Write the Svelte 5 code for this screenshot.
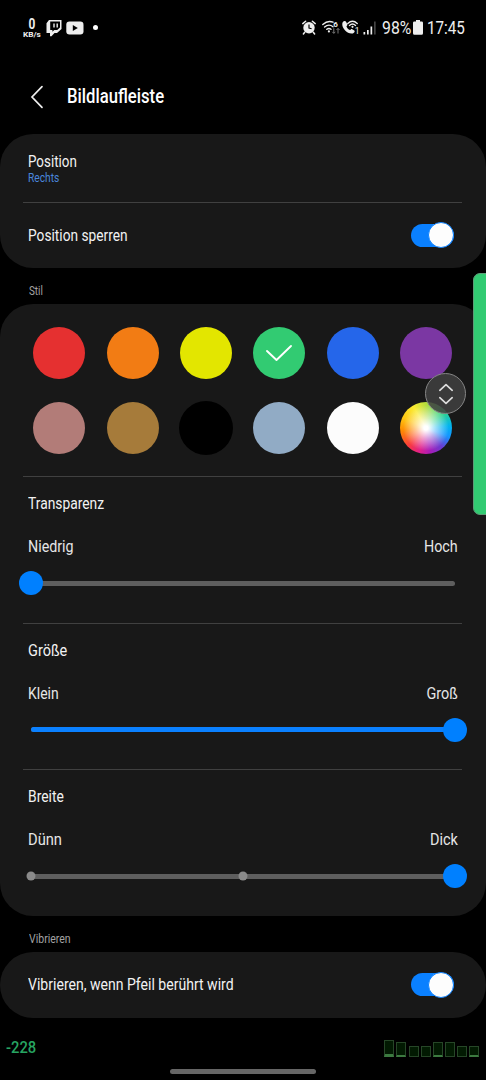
<script>
	let locked = true;
	let vibrate = true;
	let selected = 3;

	const colors = [
		"#e53030",
		"#f27c14",
		"#e3e600",
		"#32cb72",
		"#2566ea",
		"#7b37a3",
		"#b27c78",
		"#a67b3a",
		"#000000",
		"#91abc5",
		"#fcfcfc",
		"wheel"
	];

	const sliders = [
		{ title: "Transparenz", width: 76, min: "Niedrig", minWidth: 45.5, max: "Hoch", maxWidth: 34, value: 0, filled: true, ticks: [] },
		{ title: "Größe", width: 39, min: "Klein", minWidth: 30.5, max: "Groß", maxWidth: 31.5, value: 100, filled: true, ticks: [] },
		{ title: "Breite", width: 35.5, min: "Dünn", minWidth: 34, max: "Dick", maxWidth: 28, value: 100, filled: false, ticks: [0, 50] }
	];

	const bars = [
		{ height: 17, level: 2 },
		{ height: 15, level: 1 },
		{ height: 11, level: 0 },
		{ height: 11, level: 0 },
		{ height: 15, level: 1 },
		{ height: 15, level: 0 },
		{ height: 11, level: 0 },
		{ height: 11, level: 1 }
	];

	// condense the text to a given width
	function fit(node, width) {
		node.style.transform = `scaleX(${width / node.offsetWidth})`;
	}
</script>

<div class="screen">
	<header class="status">
		<div class="speed">
			<b>0</b>
			<small use:fit={17.5}>KB/s</small>
		</div>
		<svg class="twitch" width="16" height="18" viewBox="0 0 16 18">
			<path fill="#eee" fill-rule="evenodd" d="M3 1H15.5V10L11 14H8.5L5.5 17.2H4V14H.5V4.2ZM4.2 2.5V11H6.4V12.8L8.3 11H11.2L14 8.6V2.5Z" />
			<path stroke="#eee" stroke-width="1.4" d="M8 4.5v4M11.2 4.5v4" />
		</svg>
		<svg class="youtube" width="18" height="14" viewBox="0 0 18 14">
			<rect x=".3" y=".5" width="17.2" height="13" rx="3.2" fill="#eee" />
			<path d="M6.8 4v6l5-3z" fill="#000" />
		</svg>
		<i class="dot"></i>
		<div class="spacer"></div>
		<svg class="alarm" width="14" height="15" viewBox="0 0 14 15">
			<circle cx="7" cy="7.7" r="5.7" fill="#eee" />
			<path d="M.8 3.6 3.6 1.2M13.2 3.6 10.4 1.2M2.7 12.3 1.4 14M11.3 12.3 12.6 14" stroke="#eee" stroke-width="1.5" stroke-linecap="round" />
			<path d="M7 4.5V8l2.6.8" fill="none" stroke="#000" stroke-width="1.2" />
		</svg>
		<svg class="wifi" width="19" height="15" viewBox="0 0 19 15">
			<g fill="none" stroke="#eee" stroke-width="1.4" stroke-linecap="round">
				<path d="M.8 4.5Q5.8-.1 11 2.2M2.6 7Q6.8 3.4 11 6.7M4.8 9.3Q6.9 7.7 9 9.3" />
			</g>
			<circle cx="6.9" cy="11.4" r="1.1" fill="#eee" />
			<text x="11.2" y="6.8" font-size="8" font-weight="700" fill="#eee">6</text>
			<path d="M11.8 8.2v5M10.3 11.8l1.5 1.6 1.5-1.6M16 13.5v-5M14.5 10l1.5-1.6 1.5 1.6" fill="none" stroke="#777" />
		</svg>
		<svg class="call" width="18" height="15" viewBox="0 0 18 15">
			<path d="M.7 2.2C2 .6 3.6.8 4.3 2.3L5.4 4.5C5.6 5.4 4.5 5.8 4.5 6.5 5.2 8.3 6.3 9.4 8 10c.8-.2 1.2-1.3 2.2-.8l2.1 1.3c1 .9-.2 2.5-1.4 2.9C5.6 15-1.6 7.4.7 2.2Z" fill="#eee" />
			<path d="M5.8 3.5Q10.5-1 15.2 3.5M7.5 5.4Q10.5 2.7 13.5 5.4" fill="none" stroke="#eee" stroke-width="1.4" stroke-linecap="round" />
			<circle cx="10.5" cy="6.8" r="1.1" fill="#eee" />
			<text x="12.8" y="13.6" font-size="8.5" fill="#eee">1</text>
		</svg>
		<svg class="signal" width="14" height="14" viewBox="0 0 14 14">
			<path d="M.5 11h1.7v2.5H.5zM4 9h1.7v4.5H4zM7.5 5.5h1.7v8H7.5z" fill="#eee" />
			<path d="M11 .5h1.7v13H11z" fill="#444" />
		</svg>
		<div class="battery-level"><span use:fit={29}>98%</span></div>
		<svg class="battery" width="10" height="15" viewBox="0 0 10 15">
			<path d="M3 0h4v1.4h1.6Q10 1.4 10 2.8V13.2Q10 14.8 8.6 14.8H1.4Q0 14.8 0 13.2V2.8Q0 1.4 1.4 1.4H3z" fill="#eee" />
		</svg>
		<div class="clock"><span use:fit={38}>17:45</span></div>
	</header>

	<div class="title">
		<svg width="14" height="24" viewBox="0 0 14 24">
			<path d="M12 1.7 2 12l10 10.3" fill="none" stroke="#eee" stroke-width="1.7" stroke-linecap="round" />
		</svg>
		<h1 use:fit={97.5}>Bildlaufleiste</h1>
	</div>

	<section class="card">
		<div class="row position">
			<span use:fit={48.5}>Position</span>
			<span class="value" use:fit={31.5}>Rechts</span>
		</div>
		<hr />
		<div class="row lock">
			<span use:fit={99.5}>Position sperren</span>
			<button class="toggle" class:on={locked} aria-label="Position sperren" on:click={() => (locked = !locked)}></button>
		</div>
	</section>

	<div class="label"><span use:fit={14}>Stil</span></div>

	<section class="card style">
		<div class="swatches">
			{#each colors as color, i}
				<button
					class="swatch"
					class:wheel={color === "wheel"}
					class:black={color === "#000000"}
					style={color === "wheel" ? "" : `background: ${color}`}
					aria-label="Farbe {i + 1}"
					on:click={() => (selected = i)}
				>
					{#if i === selected}
						<svg width="28" height="18" viewBox="0 0 28 18">
							<path d="M2 7 11.5 16 26 2" fill="none" stroke="#fff" stroke-width="1.9" stroke-linecap="round" stroke-linejoin="round" />
						</svg>
					{/if}
				</button>
			{/each}
		</div>
		{#each sliders as s}
			<div class="setting">
				<hr />
				<div class="name"><span use:fit={s.width}>{s.title}</span></div>
				<div class="range">
					<span use:fit={s.minWidth}>{s.min}</span>
					<span class="right" use:fit={s.maxWidth}>{s.max}</span>
				</div>
				<div class="track">
					{#if s.filled}
						<div class="fill" style="width: {s.value}%"></div>
					{/if}
					{#each s.ticks as tick}
						<i class="tick" style="left: {tick}%"></i>
					{/each}
					<i class="thumb" style="left: {s.value}%"></i>
				</div>
			</div>
		{/each}
	</section>

	<div class="label"><span use:fit={42}>Vibrieren</span></div>

	<section class="card">
		<div class="row vibrate">
			<span use:fit={205.5}>Vibrieren, wenn Pfeil berührt wird</span>
			<button class="toggle" class:on={vibrate} aria-label="Vibrieren" on:click={() => (vibrate = !vibrate)}></button>
		</div>
	</section>

	<footer>
		<span class="current" use:fit={30.5}>-228</span>
		<div class="bars">
			{#each bars as bar}
				<i style="height: {bar.height}px; border-bottom-width: {bar.level + 1}px" class:active={bar.level > 0}></i>
			{/each}
		</div>
	</footer>
	<div class="home"></div>

	<div class="scrollbar"></div>
	<div class="scroll-handle">
		<svg width="16" height="22" viewBox="0 0 16 22">
			<path d="M1.8 7.3 8 1.7l6.2 5.6M1.8 14.7 8 20.3l6.2-5.6" fill="none" stroke="#ddd" stroke-width="1.7" stroke-linecap="round" stroke-linejoin="round" />
		</svg>
	</div>
</div>

<style>
	:global(body) {
		background: #000;
	}

	.screen {
		position: relative;
		width: 486px;
		height: 1080px;
		overflow: hidden;
		box-sizing: border-box;
		background: #000;
		color: #f2f2f2;
		font-family: Roboto, "Open Sans", sans-serif;
		font-size: 16px;
		line-height: 20px;
	}

	span,
	small,
	h1 {
		display: inline-block;
		flex: none;
		white-space: nowrap;
		transform-origin: left center;
	}

	svg {
		display: block;
		flex: none;
	}

	button {
		border: 0;
		padding: 0;
	}

	hr {
		height: 1px;
		margin: 0 24px 0 23px;
		border: 0;
		background: #404040;
	}

	.status {
		display: flex;
		align-items: center;
		height: 55px;
		padding: 0 21px 0 23px;
		color: #eee;
	}

	.speed {
		width: 18px;
		height: 20px;
		text-align: center;
	}

	.speed b {
		display: block;
		font-size: 14px;
		font-weight: 700;
		line-height: 13px;
		transform: scaleX(0.85);
	}

	.speed small {
		display: block;
		width: max-content;
		font-size: 8px;
		font-weight: 700;
		line-height: 7px;
	}

	.twitch {
		margin-left: 5px;
	}

	.youtube {
		margin-left: 4px;
	}

	.dot {
		width: 5px;
		height: 5px;
		margin-left: 9px;
		border-radius: 50%;
		background: #fff;
	}

	.spacer {
		flex: 1;
	}

	.wifi {
		margin-left: 6px;
	}

	.call {
		margin-left: 1px;
	}

	.signal {
		margin-left: 3px;
	}

	.battery-level {
		width: 30px;
		margin-left: 5px;
		font-size: 18px;
	}

	.battery {
		margin-left: 1px;
	}

	.clock {
		width: 38px;
		margin-left: 4px;
		font-size: 18px;
	}

	.title {
		display: flex;
		align-items: center;
		height: 79px;
		padding: 4px 0 0 30px;
		box-sizing: border-box;
	}

	h1 {
		margin: 0 0 0 22.5px;
		font-size: 19.5px;
		font-weight: 500;
		line-height: 24px;
		color: #fff;
	}

	.card {
		border-radius: 33px;
		background: #181818;
	}

	.row {
		display: flex;
		align-items: center;
		justify-content: space-between;
		box-sizing: border-box;
		padding: 0 32px 0 28px;
	}

	.position {
		flex-direction: column;
		align-items: flex-start;
		justify-content: flex-start;
		height: 68px;
		padding-top: 18px;
	}

	.value {
		margin-top: -2px;
		font-size: 12px;
		line-height: 16px;
		color: #4a86dc;
	}

	.lock {
		height: 65px;
	}

	.vibrate {
		height: 66px;
	}

	.toggle {
		display: flex;
		align-items: center;
		width: 43px;
		height: 23px;
		margin-top: -1px;
		border-radius: 12px;
		background: #555;
	}

	.toggle::after {
		content: "";
		flex: none;
		width: 24px;
		height: 24px;
		border: 1px solid #777;
		border-radius: 50%;
		background: #fdfdfd;
	}

	.toggle.on {
		justify-content: flex-end;
		background: #0a80ff;
	}

	.toggle.on::after {
		border-color: #0a80ff;
	}

	.label {
		height: 36px;
		box-sizing: border-box;
		padding: 15px 0 0 28.5px;
		font-size: 12px;
		line-height: 16px;
		color: #a3a3a3;
	}

	.style {
		height: 612px;
	}

	.swatches {
		display: grid;
		grid-template-columns: repeat(6, 52px);
		grid-auto-rows: 52px;
		gap: 23px 21.4px;
		height: 172px;
		box-sizing: border-box;
		padding: 22.5px 0 0 33.3px;
	}

	.swatch {
		display: flex;
		align-items: center;
		justify-content: center;
		border-radius: 50%;
	}

	.swatch.black {
		box-shadow: 0 0 0 1px #000;
	}

	.wheel {
		background:
			radial-gradient(circle closest-side, #fff 8%, rgba(255, 255, 255, 0.6) 38%, rgba(255, 255, 255, 0) 88%),
			conic-gradient(#b4dc3c, #30d48c 50deg, #00b4f0 85deg, #1496ff 110deg, #6a3cd0 140deg, #a81cb8 170deg, #e0208c 195deg, #fa3c3c 225deg, #ff8c00 265deg, #ffc814 295deg, #faeb32 330deg, #b4dc3c);
	}

	.setting {
		height: 146.67px;
	}

	.name {
		height: 20px;
		padding: 17px 28px 0;
	}

	.range {
		display: flex;
		justify-content: space-between;
		padding: 23px 28px 0;
		color: #e6e6e6;
	}

	.right {
		transform-origin: right center;
	}

	.track {
		position: relative;
		height: 5px;
		margin: 23.5px 31px 0;
		border-radius: 3px;
		background: #5e5e5e;
	}

	.fill {
		height: 5px;
		border-radius: 3px;
		background: #0a80ff;
	}

	.thumb,
	.tick {
		position: absolute;
		top: 50%;
		width: 24px;
		height: 24px;
		border-radius: 50%;
		background: #0080ff;
		transform: translate(-50%, -50%);
	}

	.tick {
		width: 9px;
		height: 9px;
		background: #8a8a8a;
	}

	footer {
		display: flex;
		justify-content: space-between;
		height: 51px;
		box-sizing: border-box;
		padding: 19px 7px 0 6px;
	}

	.current {
		height: 20px;
		margin-top: 1px;
		font-weight: 500;
		color: #27a562;
	}

	.bars {
		display: flex;
		align-items: flex-end;
		gap: 2.1px;
		height: 20px;
	}

	.bars i {
		box-sizing: border-box;
		width: 10px;
		border: 1px solid #264627;
		background: #021a02;
	}

	.bars i.active {
		border-bottom-color: #3c7a40;
	}

	.home {
		width: 146px;
		height: 5px;
		margin-left: 170px;
		border-radius: 3px;
		background: #666;
	}

	/* floating scroll handle over the page */
	.scrollbar {
		position: absolute;
		top: 273px;
		right: -2px;
		width: 15px;
		height: 242px;
		box-sizing: border-box;
		border: 1px solid #5d9c77;
		border-radius: 7px 0 0 7px;
		background: #32cb72;
	}

	.scroll-handle {
		position: absolute;
		top: 373px;
		left: 425px;
		display: flex;
		align-items: center;
		justify-content: center;
		width: 41px;
		height: 41px;
		box-sizing: border-box;
		border: 1px solid #858585;
		border-radius: 50%;
		background: rgba(64, 64, 64, 0.86);
	}
</style>
